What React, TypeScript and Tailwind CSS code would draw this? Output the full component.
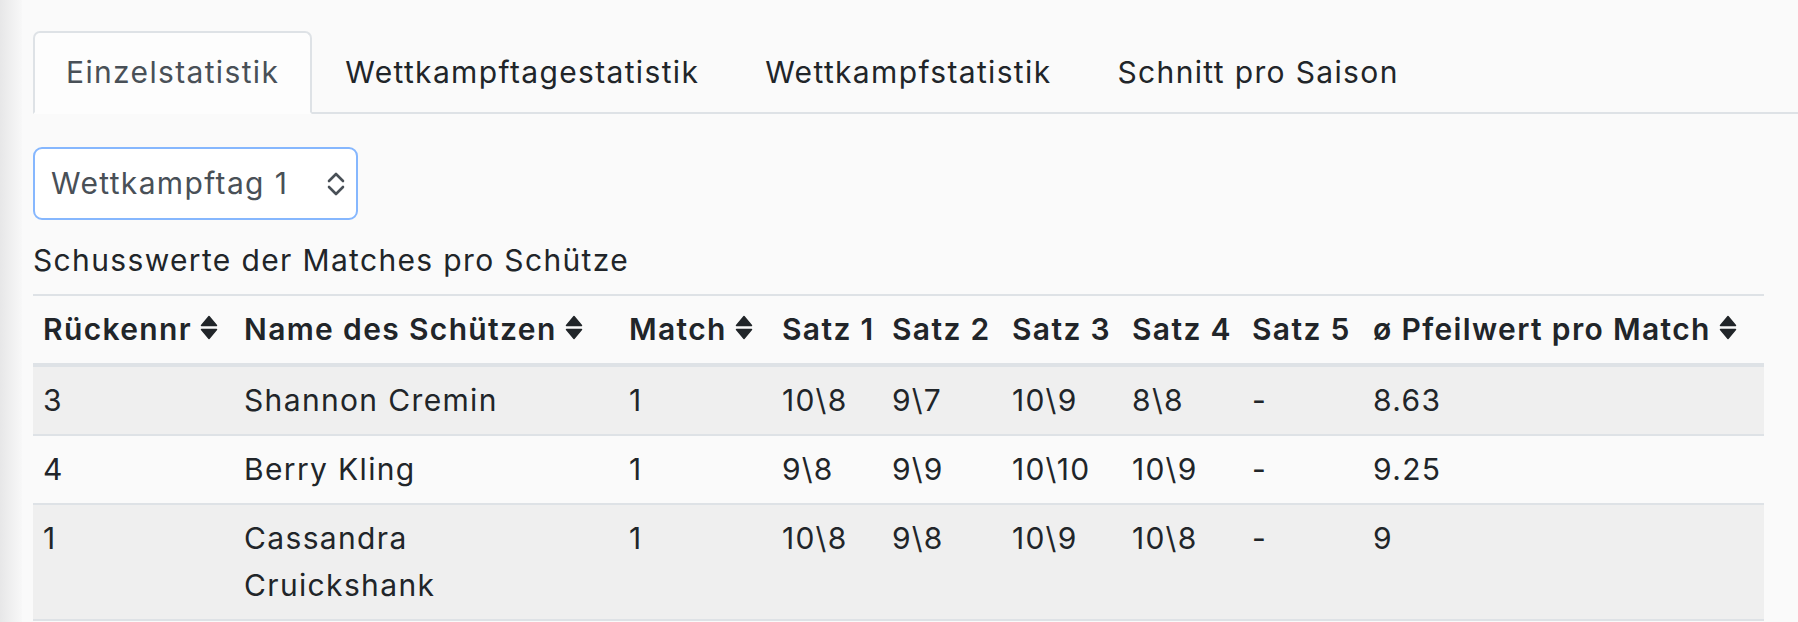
import React from "react";

const tabs = ["Einzelstatistik", "Wettkampftagestatistik", "Wettkampfstatistik", "Schnitt pro Saison"];

const rows = [
  { nr: "3", name: "Shannon Cremin", match: "1", saetze: ["10\\8", "9\\7", "10\\9", "8\\8", "-"], avg: "8.63" },
  { nr: "4", name: "Berry Kling", match: "1", saetze: ["9\\8", "9\\9", "10\\10", "10\\9", "-"], avg: "9.25" },
  { nr: "1", name: "Cassandra Cruickshank", match: "1", saetze: ["10\\8", "9\\8", "10\\9", "10\\8", "-"], avg: "9" },
];

const SortIcon = () => (
  <svg width="18" height="25" viewBox="0 0 18 25" className="ml-[8px] inline-block align-baseline" fill="#212529">
    <path d="M9 1.5 L16.5 10.5 H1.5 Z" stroke="#212529" strokeWidth="1.5" strokeLinejoin="round" />
    <path d="M1.5 14.5 H16.5 L9 23.5 Z" stroke="#212529" strokeWidth="1.5" strokeLinejoin="round" />
  </svg>
);

const SelectArrows = () => (
  <svg width="18" height="26" viewBox="0 0 18 26" fill="none" stroke="#495057" strokeWidth="2.6" strokeLinecap="round" strokeLinejoin="round">
    <polyline points="2,10 9,3 16,10" />
    <polyline points="2,16 9,23 16,16" />
  </svg>
);

const th = "border-t-2 border-b-4 border-[#dee2e6] px-[10px] py-[10px] text-left font-semibold whitespace-nowrap";
const td = "border-b-2 border-[#dee2e6] px-[10px] py-[10px] align-top";

const App = () => {
  return (
    <div className="flex min-h-[622px] bg-[#fafafa] font-['Inter',sans-serif] text-[30px] leading-[47px] tracking-[0.045em] text-[#212529]">
      <div className="w-[22px] shrink-0 bg-linear-to-r from-[#e7e7e8] to-[#f8f8f8]" />
      <div className="flex-1 pl-[11px] pt-[31px]">
        {/* tabs */}
        <ul className="flex border-b-2 border-[#dee2e6]">
          {tabs.map((tab, i) => (
            <li
              key={tab}
              className={
                i === 0
                  ? "-mb-[2px] rounded-t-[7px] border-2 border-[#dee2e6] border-b-[#fdfdfd] bg-[#fdfdfd] px-[31px] py-[16px] text-[#495057]"
                  : "-mb-[2px] border-2 border-transparent px-[31px] py-[16px] text-[#212529]"
              }
            >
              {tab}
            </li>
          ))}
        </ul>

        <div className="pr-[34px]">
          <div className="mt-[33px] flex h-[73px] w-[325px] items-center justify-between rounded-[9px] border-2 border-[#86b7fe] bg-white pl-[16px] pr-[11px] text-[#495057]">
            <span>Wettkampftag 1</span>
            <SelectArrows />
          </div>

          <table className="mt-[7px] w-full table-fixed border-separate border-spacing-0">
            <caption className="caption-top py-[10px] text-left">Schusswerte der Matches pro Schütze</caption>
            <colgroup>
              <col className="w-[201px]" />
              <col className="w-[385px]" />
              <col className="w-[153px]" />
              <col className="w-[110px]" />
              <col className="w-[120px]" />
              <col className="w-[120px]" />
              <col className="w-[120px]" />
              <col className="w-[121px]" />
              <col />
            </colgroup>
            <thead>
              <tr className="bg-[#fafafa]">
                <th className={th}>
                  Rückennr<SortIcon />
                </th>
                <th className={th}>
                  Name des Schützen<SortIcon />
                </th>
                <th className={th}>
                  Match<SortIcon />
                </th>
                <th className={th}>Satz 1</th>
                <th className={th}>Satz 2</th>
                <th className={th}>Satz 3</th>
                <th className={th}>Satz 4</th>
                <th className={th}>Satz 5</th>
                <th className={th}>
                  ø Pfeilwert pro Match<SortIcon />
                </th>
              </tr>
            </thead>
            <tbody>
              {rows.map((row, i) => (
                <tr key={row.nr} className={i % 2 === 0 ? "bg-[#efefef]" : "bg-[#fafafa]"}>
                  <td className={td}>{row.nr}</td>
                  <td className={td}>
                    <span className="inline-block max-w-[300px]">{row.name}</span>
                  </td>
                  <td className={td}>{row.match}</td>
                  {row.saetze.map((s, j) => (
                    <td key={j} className={td}>
                      {s}
                    </td>
                  ))}
                  <td className={td}>{row.avg}</td>
                </tr>
              ))}
            </tbody>
          </table>
        </div>
      </div>
    </div>
  );
};

export default App;
